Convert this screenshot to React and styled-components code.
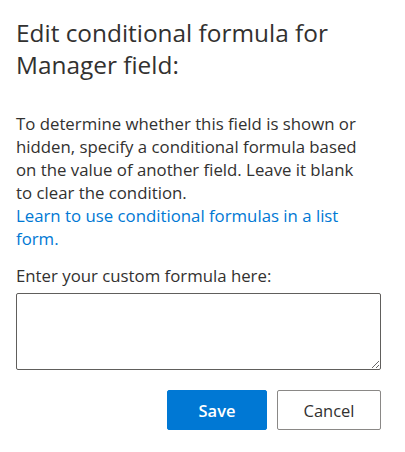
import styled, { createGlobalStyle } from "styled-components";

const GlobalStyle = createGlobalStyle`
  body {
    margin: 0;
    background: #ffffff;
    font-family: "Open Sans", "Noto Sans", sans-serif;
    color: #323130;
  }
`;

const Panel = styled.div`
  width: 405px;
  box-sizing: border-box;
  padding: 17px 24px 20px 16px;
  display: flex;
  flex-direction: column;
`;

const Title = styled.h1`
  margin: 0;
  font-size: 24.4px;
  font-weight: 400;
  line-height: 31.5px;
  color: #323130;
`;

const Description = styled.div`
  margin-top: 32px;
  max-width: 350px;
  font-size: 16.8px;
  line-height: 23px;
`;

const Link = styled.a`
  display: block;
  color: #0078d4;
  text-decoration: none;
  cursor: pointer;
`;

const Label = styled.label`
  margin-top: 14px;
  font-size: 16.8px;
  line-height: 23px;
`;

const FormulaInput = styled.textarea`
  margin-top: 6px;
  box-sizing: border-box;
  width: 100%;
  height: 77px;
  border: 1px solid #605e5c;
  border-radius: 2px;
  padding: 6px 8px;
  font-family: inherit;
  font-size: 15px;
  outline: none;
`;

const Actions = styled.div`
  margin-top: 20px;
  display: flex;
  justify-content: flex-end;
  gap: 10px;
`;

const Button = styled.button`
  box-sizing: border-box;
  height: 40px;
  width: ${(props) => (props.primary ? "100px" : "104px")};
  border-radius: 2px;
  border: 1px solid ${(props) => (props.primary ? "#0078d4" : "#8a8886")};
  background: ${(props) => (props.primary ? "#0078d4" : "#ffffff")};
  color: ${(props) => (props.primary ? "#ffffff" : "#323130")};
  font-family: inherit;
  font-size: 16.5px;
  font-weight: ${(props) => (props.primary ? 600 : 400)};
  cursor: pointer;
`;

const App = () => {
  return (
    <Panel>
      <GlobalStyle />
      <Title>Edit conditional formula for Manager field:</Title>
      <Description>
        To determine whether this field is shown or hidden, specify a
        conditional formula based on the value of another field. Leave it
        blank to clear the condition.
        <Link>Learn to use conditional formulas in a list form.</Link>
      </Description>
      <Label htmlFor="formula">Enter your custom formula here:</Label>
      <FormulaInput id="formula" />
      <Actions>
        <Button primary>Save</Button>
        <Button>Cancel</Button>
      </Actions>
    </Panel>
  );
};

export default App;
